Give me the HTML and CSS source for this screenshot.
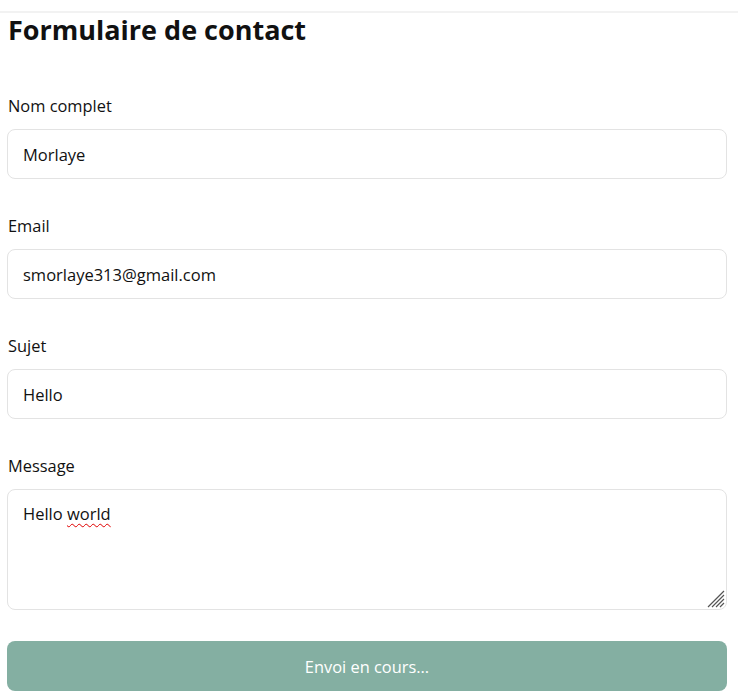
FILE: index.html
```html
<!DOCTYPE html>
<html lang="fr">
<head>
<meta charset="utf-8">
<title>Formulaire de contact</title>
<link rel="stylesheet" href="styles.css">
</head>
<body>
<div class="topbar"></div>
<main class="page">
  <h1 class="title">Formulaire de contact</h1>
  <form class="form">
    <div class="group">
      <label class="label" for="nom">Nom complet</label>
      <input class="field" id="nom" type="text" value="Morlaye">
    </div>
    <div class="group">
      <label class="label" for="email">Email</label>
      <input class="field" id="email" type="email" value="smorlaye313@gmail.com">
    </div>
    <div class="group">
      <label class="label" for="sujet">Sujet</label>
      <input class="field" id="sujet" type="text" value="Hello">
    </div>
    <div class="group">
      <label class="label">Message</label>
      <div class="field area" role="textbox" aria-multiline="true">Hello <span class="misspelled">world</span>
        <svg class="grip" width="18" height="18" viewBox="0 0 18 18">
          <path d="M17 1 L1 17 M17 5 L5 17 M17 9 L9 17 M17 13 L13 17" stroke="#555" stroke-width="1.2" fill="none"/>
        </svg>
      </div>
    </div>
    <button class="submit" type="button" disabled>Envoi en cours...</button>
  </form>
</main>
</body>
</html>
```

FILE: styles.css
```css
* { box-sizing: border-box; }
html, body { margin: 0; padding: 0; background: #fff; }
body {
  font-family: "Open Sans", "Noto Sans", "Liberation Sans", sans-serif;
  color: #111;
}
.topbar {
  height: 13px;
  border-bottom: 2px solid #f2f2f2;
}
.page {
  padding: 0 11px 0 7px;
}
.title {
  margin: 0;
  padding-left: 1px;
  font-size: 27px;
  font-weight: 700;
  line-height: 34px;
  color: #111;
}
.form {
  margin-top: 47px;
  display: flex;
  flex-direction: column;
}
.group {
  display: flex;
  flex-direction: column;
  margin-bottom: 35px;
}
.group:nth-child(4) { margin-bottom: 31px; }
.label {
  font-size: 16.4px;
  line-height: 24px;
  margin-bottom: 11px;
  padding-left: 1px;
  color: #111;
}
.field {
  width: 720px;
  height: 50px;
  border: 1px solid #e3e3e3;
  border-radius: 8px;
  padding: 0 15px;
  font-family: inherit;
  font-size: 16.5px;
  color: #111;
  background: #fff;
  outline: none;
}
.area {
  position: relative;
  height: 121px;
  padding: 12px 15px;
  line-height: 24px;
}
.misspelled {
  text-decoration: underline wavy #e00000;
  text-decoration-thickness: 1px;
  text-underline-offset: 3px;
}
.grip {
  position: absolute;
  right: 1px;
  bottom: 1px;
}
.submit {
  width: 720px;
  height: 50px;
  border: none;
  border-radius: 8px;
  background: #84afa2;
  color: #fff;
  font-family: inherit;
  font-size: 16.4px;
  cursor: not-allowed;
}
```
